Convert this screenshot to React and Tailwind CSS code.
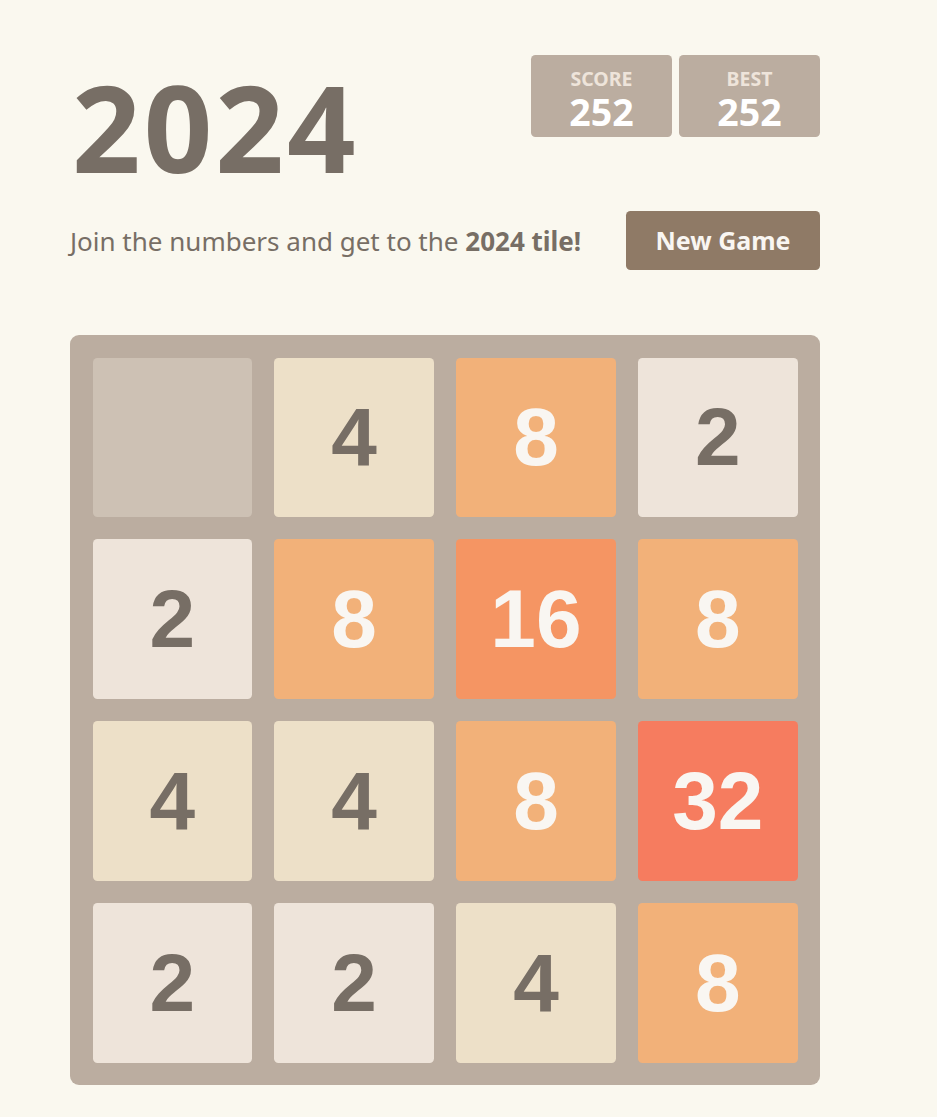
import React from 'react';

const board = [
  [0, 4, 8, 2],
  [2, 8, 16, 8],
  [4, 4, 8, 32],
  [2, 2, 4, 8],
];

// classic 2048 palette
const tileStyles = {
  0: 'bg-[#cdc1b4]',
  2: 'bg-[#eee4da] text-[#776e65]',
  4: 'bg-[#ede0c8] text-[#776e65]',
  8: 'bg-[#f2b179] text-[#f9f6f2]',
  16: 'bg-[#f59563] text-[#f9f6f2]',
  32: 'bg-[#f67c5f] text-[#f9f6f2]',
};

const sans = { fontFamily: '"Noto Sans", "Open Sans", sans-serif' };

const ScoreBox = ({ label, value }) => (
  <div className="w-[141px] h-[82px] rounded-[4.5px] bg-[#bbada0] flex flex-col items-center pt-[13px]" style={sans}>
    <div className="text-[19.5px] leading-[22px] font-bold text-[#eee4da] uppercase">{label}</div>
    <div className="mt-[2px] text-[37.5px] leading-[40px] font-bold text-white">{value}</div>
  </div>
);

const Tile = ({ value }) => (
  <div
    className={`h-[159.4px] rounded-[4.5px] flex items-center justify-center text-[82px] font-bold leading-none ${tileStyles[value]}`}
    style={{ fontFamily: '"Liberation Sans", Arial, sans-serif' }}
  >
    {value ? value : ''}
  </div>
);

export default function App() {
  return (
    <div className="min-h-[1117px] bg-[#faf8ef] text-[#776e65]" style={sans}>
      <div className="w-[750px] ml-[70px] pt-[55px] pb-8">
        {/* header */}
        <div className="flex justify-between items-start">
          <h1 className="mt-[12px] ml-[2px] text-[120px] leading-[120px] font-bold tracking-[3px]">2024</h1>
          <div className="flex gap-[7px]">
            <ScoreBox label="Score" value={252} />
            <ScoreBox label="Best" value={252} />
          </div>
        </div>

        <div className="mt-[24px] flex justify-between items-center">
          <p className="text-[26px] leading-none">
            Join the numbers and get to the <strong className="font-bold">2024 tile!</strong>
          </p>
          <button className="w-[194px] h-[59px] rounded-[4.5px] bg-[#8f7a66] text-[#f9f6f2] text-[25px] font-bold">
            New Game
          </button>
        </div>

        {/* board */}
        <div className="mt-[65px] w-[750px] h-[750px] rounded-[9px] bg-[#bbada0] p-[22.5px] grid grid-cols-4 gap-[22.5px]">
          {board.flat().map((v, i) => (
            <Tile key={i} value={v} />
          ))}
        </div>
      </div>
    </div>
  );
}
